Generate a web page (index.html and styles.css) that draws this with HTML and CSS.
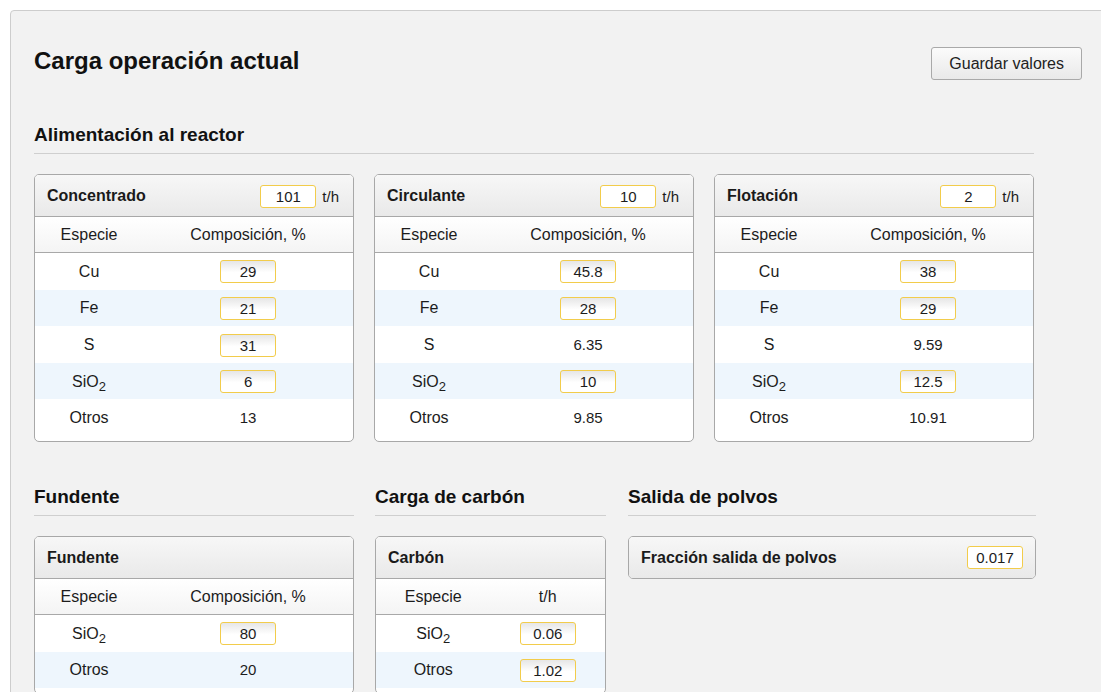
FILE: index.html
```html
<!DOCTYPE html>
<html lang="es">
<head>
<meta charset="utf-8">
<title>Carga operación actual</title>
<link rel="stylesheet" href="styles.css">
</head>
<body>
<div class="panel">
  <div class="page-head">
    <h1 class="page-title">Carga operación actual</h1>
    <button class="btn" type="button">Guardar valores</button>
  </div>

  <section class="feed">
    <h2 class="section-title">Alimentación al reactor</h2>
    <div class="feed-grid">
      <div class="card">
        <div class="card-head">
          <span class="card-title">Concentrado</span>
          <span class="rate"><input class="num" value="101"><span class="unit">t/h</span></span>
        </div>
        <div class="col-head"><span>Especie</span><span>Composición, %</span></div>
        <div class="rows">
          <div class="row"><span>Cu</span><span><input class="num field" value="29"></span></div>
          <div class="row alt"><span>Fe</span><span><input class="num field" value="21"></span></div>
          <div class="row"><span>S</span><span><input class="num field" value="31"></span></div>
          <div class="row alt"><span>SiO<sub>2</sub></span><span><input class="num field" value="6"></span></div>
          <div class="row"><span>Otros</span><span class="val">13</span></div>
        </div>
      </div>

      <div class="card">
        <div class="card-head">
          <span class="card-title">Circulante</span>
          <span class="rate"><input class="num" value="10"><span class="unit">t/h</span></span>
        </div>
        <div class="col-head"><span>Especie</span><span>Composición, %</span></div>
        <div class="rows">
          <div class="row"><span>Cu</span><span><input class="num field" value="45.8"></span></div>
          <div class="row alt"><span>Fe</span><span><input class="num field" value="28"></span></div>
          <div class="row"><span>S</span><span class="val">6.35</span></div>
          <div class="row alt"><span>SiO<sub>2</sub></span><span><input class="num field" value="10"></span></div>
          <div class="row"><span>Otros</span><span class="val">9.85</span></div>
        </div>
      </div>

      <div class="card">
        <div class="card-head">
          <span class="card-title">Flotación</span>
          <span class="rate"><input class="num" value="2"><span class="unit">t/h</span></span>
        </div>
        <div class="col-head"><span>Especie</span><span>Composición, %</span></div>
        <div class="rows">
          <div class="row"><span>Cu</span><span><input class="num field" value="38"></span></div>
          <div class="row alt"><span>Fe</span><span><input class="num field" value="29"></span></div>
          <div class="row"><span>S</span><span class="val">9.59</span></div>
          <div class="row alt"><span>SiO<sub>2</sub></span><span><input class="num field" value="12.5"></span></div>
          <div class="row"><span>Otros</span><span class="val">10.91</span></div>
        </div>
      </div>
    </div>
  </section>

  <div class="lower">
    <section class="flux">
      <h2 class="section-title">Fundente</h2>
      <div class="card">
        <div class="card-head"><span class="card-title">Fundente</span></div>
        <div class="col-head"><span>Especie</span><span>Composición, %</span></div>
        <div class="rows">
          <div class="row"><span>SiO<sub>2</sub></span><span><input class="num field" value="80"></span></div>
          <div class="row alt"><span>Otros</span><span class="val">20</span></div>
        </div>
      </div>
    </section>

    <section class="coal">
      <h2 class="section-title">Carga de carbón</h2>
      <div class="card half">
        <div class="card-head"><span class="card-title">Carbón</span></div>
        <div class="col-head"><span>Especie</span><span>t/h</span></div>
        <div class="rows">
          <div class="row"><span>SiO<sub>2</sub></span><span><input class="num field" value="0.06"></span></div>
          <div class="row alt"><span>Otros</span><span><input class="num field" value="1.02"></span></div>
        </div>
      </div>
    </section>

    <section class="dust">
      <h2 class="section-title">Salida de polvos</h2>
      <div class="card">
        <div class="card-head">
          <span class="card-title">Fracción salida de polvos</span>
          <input class="num" value="0.017">
        </div>
      </div>
    </section>
  </div>
</div>
</body>
</html>
```

FILE: styles.css
```css
html, body {
  margin: 0;
  background: #ffffff;
  overflow: hidden;
}

body {
  padding: 10px 0 0 10px;
  font-family: "Liberation Sans", Arial, sans-serif;
  color: #1c1c1c;
}

.panel {
  width: 1120px;
  min-height: 760px;
  box-sizing: border-box;
  padding: 34px 0 0 23px;
  background: #f2f2f2;
  border: 1px solid #cdcdcd;
  border-radius: 4px;
}

/* page header: title left, save button right */
.page-head {
  width: 1048px;
  display: flex;
  justify-content: space-between;
  align-items: flex-start;
}

.page-title {
  margin: 2px 0 0;
  font-size: 24px;
  line-height: 28px;
  font-weight: bold;
  color: #111;
}

.btn {
  margin-top: 2px;
  height: 33px;
  padding: 0 17px;
  font-family: "Liberation Sans", Arial, sans-serif;
  font-size: 16px;
  color: #222;
  background: linear-gradient(#fbfbfb, #e9e9e9);
  border: 1px solid #a9a9a9;
  border-radius: 3px;
}

/* section headings with rule below */
.section-title {
  margin: 0 0 20px;
  padding: 1px 0 7px;
  border-bottom: 1px solid #cfcfcf;
  font-size: 19px;
  line-height: 22px;
  font-weight: bold;
  color: #111;
}

.feed {
  width: 1000px;
  margin-top: 43px;
}

.feed-grid {
  display: grid;
  grid-template-columns: repeat(3, 320px);
  column-gap: 20px;
}

.lower {
  display: flex;
  margin-top: 43px;
}

.flux { width: 320px; }
.coal { width: 231px; margin-left: 21px; }
.dust { width: 408px; margin-left: 22px; }

/* cards */
.card {
  background: #fff;
  border: 1px solid #a8a8a8;
  border-radius: 5px;
  overflow: hidden;
}

.card-head {
  height: 41px;
  box-sizing: border-box;
  display: flex;
  align-items: center;
  justify-content: space-between;
  padding: 1px 14px 0 12px;
  background: linear-gradient(#f7f7f7, #e9e9e9);
  font-size: 16px;
}

.dust .card-head {
  padding-right: 12px;
}

.card-title {
  font-weight: bold;
  color: #1a1a1a;
}

.rate {
  display: flex;
  align-items: center;
  gap: 6px;
}

.unit {
  font-size: 15px;
}

.col-head {
  display: grid;
  grid-template-columns: 34% 66%;
  box-sizing: border-box;
  height: 37px;
  padding-top: 1px;
  align-items: center;
  text-align: center;
  border-top: 1px solid #a8a8a8;
  border-bottom: 1px solid #a8a8a8;
  background: linear-gradient(#ffffff, #f4f4f4);
  font-size: 16px;
}

.half .col-head,
.half .row {
  grid-template-columns: 50% 50%;
}

.rows {
  padding-bottom: 5px;
}

.row {
  display: grid;
  grid-template-columns: 34% 66%;
  height: 36.6px;
  align-items: center;
  text-align: center;
  font-size: 16px;
}

.row.alt {
  background: #eef6fd;
}

.row > span {
  display: block;
  line-height: 23px;
}

.row input {
  vertical-align: middle;
}

.val {
  font-size: 15px;
}

sub {
  font-size: 13px;
  line-height: 0;
  vertical-align: -4px;
}

/* numeric inputs */
.num {
  width: 56px;
  height: 23px;
  box-sizing: border-box;
  padding: 0 2px;
  border: 1px solid #f2cc4b;
  border-radius: 3px;
  background: #fff;
  font-family: "Liberation Sans", Arial, sans-serif;
  font-size: 15px;
  color: #1c1c1c;
  text-align: center;
  outline: none;
}

.field {
  background: linear-gradient(#e6e6e6, #ffffff 55%);
}
```
